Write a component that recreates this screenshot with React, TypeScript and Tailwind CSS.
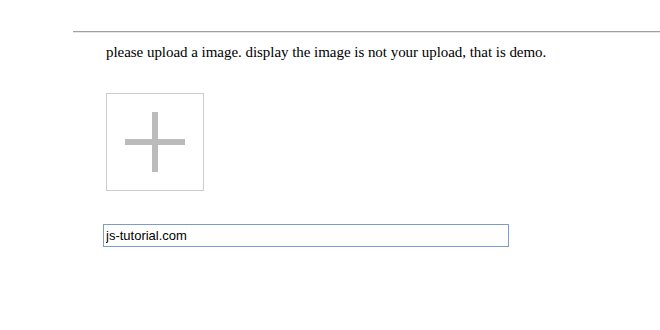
import React from "react";

export default function App() {
  return (
    <div className="min-h-screen bg-white pt-[31px] pl-[73px]" style={{ fontFamily: '"Liberation Serif", serif' }}>
      <div className="h-[2px] border-t border-[#a0a0a0] border-b-[#e6e6e6] border-b" />
      <div className="pl-[33px] pt-[10px]">
        <p className="text-[15px] leading-[18px] text-black tracking-[-0.04px]">
          please upload a image. display the image is not your upload, that is demo.
        </p>
        <div className="mt-[32px] w-[98px] h-[98px] border border-[#cccccc] flex items-center justify-center">
          <svg width="60" height="60" viewBox="0 0 60 60">
            <rect x="27" y="0" width="6" height="60" fill="#bbbbbb" />
            <rect x="0" y="27" width="60" height="6" fill="#bbbbbb" />
          </svg>
        </div>
      </div>
      <div className="pl-[30px] mt-[32px]">
        <input
          defaultValue="js-tutorial.com"
          className="w-[406px] h-[23px] border border-[#7a9cd3] px-[2px] text-[13px] text-black outline-none"
          style={{ fontFamily: '"Liberation Sans", Arial, sans-serif' }}
        />
      </div>
    </div>
  );
}
